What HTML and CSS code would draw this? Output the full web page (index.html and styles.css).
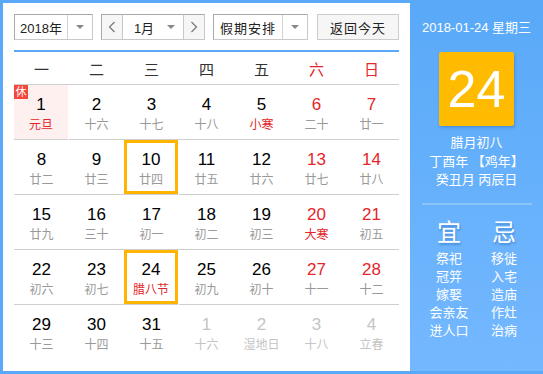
FILE: index.html
```html
<!DOCTYPE html>
<html lang="zh-CN">
<head>
  <meta charset="UTF-8">
  <title>万年历</title>
  <link rel="stylesheet" href="styles.css">
</head>
<body>
<div class="calendar">
  <div class="cal-main">
    <div class="toolbar">
      <div class="select select-year">
        <span class="select-text">2018年</span>
        <span class="select-arrow"></span>
      </div>
      <div class="month-group">
        <button class="nav-btn">
          <svg width="8" height="12" viewBox="0 0 8 12"><path d="M6.5 1 L1.5 6 L6.5 11" fill="none" stroke="#777" stroke-width="1.2"/></svg>
        </button>
        <div class="select select-month">
          <span class="select-text">1月</span>
          <span class="select-arrow no-line"></span>
        </div>
        <button class="nav-btn">
          <svg width="8" height="12" viewBox="0 0 8 12"><path d="M1.5 1 L6.5 6 L1.5 11" fill="none" stroke="#777" stroke-width="1.2"/></svg>
        </button>
      </div>
      <div class="select select-holiday">
        <span class="select-text">假期安排</span>
        <span class="select-arrow"></span>
      </div>
      <button class="today-btn">返回今天</button>
    </div>

    <div class="week-head">
      <span>一</span><span>二</span><span>三</span><span>四</span><span>五</span>
      <span class="red">六</span><span class="red">日</span>
    </div>

    <div class="days">
      <div class="day holiday"><span class="badge">休</span><b>1</b><i class="red">元旦</i></div>
      <div class="day"><b>2</b><i>十六</i></div>
      <div class="day"><b>3</b><i>十七</i></div>
      <div class="day"><b>4</b><i>十八</i></div>
      <div class="day"><b>5</b><i class="red">小寒</i></div>
      <div class="day weekend"><b>6</b><i>二十</i></div>
      <div class="day weekend"><b>7</b><i>廿一</i></div>

      <div class="day"><b>8</b><i>廿二</i></div>
      <div class="day"><b>9</b><i>廿三</i></div>
      <div class="day marked"><b>10</b><i>廿四</i></div>
      <div class="day"><b>11</b><i>廿五</i></div>
      <div class="day"><b>12</b><i>廿六</i></div>
      <div class="day weekend"><b>13</b><i>廿七</i></div>
      <div class="day weekend"><b>14</b><i>廿八</i></div>

      <div class="day"><b>15</b><i>廿九</i></div>
      <div class="day"><b>16</b><i>三十</i></div>
      <div class="day"><b>17</b><i>初一</i></div>
      <div class="day"><b>18</b><i>初二</i></div>
      <div class="day"><b>19</b><i>初三</i></div>
      <div class="day weekend"><b>20</b><i class="red">大寒</i></div>
      <div class="day weekend"><b>21</b><i>初五</i></div>

      <div class="day"><b>22</b><i>初六</i></div>
      <div class="day"><b>23</b><i>初七</i></div>
      <div class="day marked"><b>24</b><i class="red">腊八节</i></div>
      <div class="day"><b>25</b><i>初九</i></div>
      <div class="day"><b>26</b><i>初十</i></div>
      <div class="day weekend"><b>27</b><i>十一</i></div>
      <div class="day weekend"><b>28</b><i>十二</i></div>

      <div class="day last"><b>29</b><i>十三</i></div>
      <div class="day last"><b>30</b><i>十四</i></div>
      <div class="day last"><b>31</b><i>十五</i></div>
      <div class="day last other"><b>1</b><i>十六</i></div>
      <div class="day last other"><b>2</b><i>湿地日</i></div>
      <div class="day last other"><b>3</b><i>十八</i></div>
      <div class="day last other"><b>4</b><i>立春</i></div>
    </div>
  </div>

  <div class="cal-side">
    <div class="side-date">2018-01-24 星期三</div>
    <div class="side-day">24</div>
    <div class="side-lunar">
      <div>腊月初八</div>
      <div>丁酉年 【鸡年】</div>
      <div>癸丑月 丙辰日</div>
    </div>
    <div class="side-line"></div>
    <div class="yiji">
      <div class="yiji-col">
        <div class="yiji-title">宜</div>
        <div>祭祀</div>
        <div>冠笄</div>
        <div>嫁娶</div>
        <div>会亲友</div>
        <div>进人口</div>
      </div>
      <div class="yiji-col">
        <div class="yiji-title">忌</div>
        <div>移徙</div>
        <div>入宅</div>
        <div>造庙</div>
        <div>作灶</div>
        <div>治病</div>
      </div>
    </div>
  </div>
</div>
</body>
</html>
```

FILE: styles.css
```css
:root {
  --blue: #59a9f8;
  --blue-light: #74b8ff;
  --red: #e4262a;
  --text: #222;
  --soft: #999;
  --line: #cfcfcf;
  --orange: #ffb400;
}
html, body {
  margin: 0;
  padding: 0;
  background: #fff;
}
body {
  font-family: 'Liberation Sans', 'Noto Sans CJK SC', sans-serif;
  color: var(--text);
}
.calendar {
  width: 543px;
  height: 374px;
  box-sizing: border-box;
  border: 3px solid var(--blue);
  border-right: 0;
  display: flex;
}
.cal-main {
  width: 407px;
  box-sizing: border-box;
  padding: 11px 11px 0 11px;
  background: #fff;
}
.toolbar {
  display: flex;
  height: 26px;
  gap: 8px;
  padding-bottom: 10px;
  border-bottom: 2px solid var(--blue);
}
.select {
  display: flex;
  box-sizing: border-box;
  height: 26px;
  border: 1px solid #c8c8c8;
  border-top-color: #a9a9a9;
  border-left-color: #a9a9a9;
  background: #fff;
  font-size: 13px;
}
.select-text {
  flex: 1;
  display: flex;
  align-items: center;
  justify-content: center;
}
.select-arrow {
  width: 24px;
  border-left: 1px solid #d4d4d4;
  position: relative;
}
.select-arrow.no-line {
  border-left: 0;
}
.select-arrow:after {
  content: "";
  position: absolute;
  left: 8px;
  top: 10px;
  border-left: 4px solid transparent;
  border-right: 4px solid transparent;
  border-top: 4px solid #888;
}
.select-year { width: 79px; }
.month-group {
  display: flex;
  width: 104px;
}
.nav-btn {
  width: 22px;
  height: 26px;
  padding: 0;
  border: 1px solid #c8c8c8;
  border-top-color: #a9a9a9;
  background: #f6f6f6;
  display: flex;
  align-items: center;
  justify-content: center;
}
.nav-btn:first-child { border-left-color: #a9a9a9; }
.select-month {
  width: 60px;
  border-left: 0;
  border-right: 0;
}
.select-month .select-text { padding-left: 6px; }
.select-holiday {
  width: 95px;
}
.select-holiday .select-text { letter-spacing: 1px; }
.today-btn {
  margin-left: 1px;
  width: 82px;
  height: 26px;
  border: 1px solid #cbcbcb;
  background: #f6f6f6;
  font-family: inherit;
  font-size: 13px;
  color: #222;
  letter-spacing: 1px;
  padding: 0;
}
.week-head {
  display: grid;
  grid-template-columns: repeat(7, 55px);
  height: 32px;
  align-items: center;
  border-bottom: 1px solid var(--line);
  font-size: 15px;
  color: #333;
  text-align: center;
}
.red { color: var(--red); }
.days {
  display: grid;
  grid-template-columns: repeat(7, 55px);
}
.day {
  border-bottom: 1px solid var(--line);
  display: flex;
  flex-direction: column;
  align-items: center;
  padding-top: 10px;
  height: 44px;
  position: relative;
}
.day.last { border-bottom: 0; }
.day b {
  font-weight: normal;
  font-size: 17px;
  line-height: 20px;
  color: #000;
}
.day i {
  font-style: normal;
  font-size: 12px;
  line-height: 16px;
  margin-top: 2px;
  color: var(--soft);
}
.day i.red { color: var(--red); }
.day.weekend b { color: var(--red); }
.day.other b, .day.other i { color: #c4c4c4; }
.day.holiday {
  background: #fff0f0;
  margin-right: 1px;
}
.badge {
  position: absolute;
  left: 0;
  top: 0;
  width: 14px;
  height: 14px;
  background: #f5463c;
  color: #fff;
  font-size: 11px;
  line-height: 14px;
  text-align: center;
}
.day.marked {
  box-shadow: inset 0 0 0 3px var(--orange);
  margin-right: 1px;
}
.cal-side {
  width: 133px;
  background: linear-gradient(180deg, var(--blue) 0%, var(--blue-light) 100%);
  color: #fff;
  display: flex;
  flex-direction: column;
  align-items: center;
  padding-top: 17px;
}
.side-date {
  font-size: 13px;
  line-height: 16px;
}
.side-day {
  margin-top: 16px;
  width: 75px;
  height: 74px;
  background: #ffbb00;
  border-radius: 2px;
  box-shadow: 1px 2px 3px rgba(0, 60, 140, 0.25);
  font-size: 52px;
  line-height: 74px;
  text-align: center;
}
.side-lunar {
  margin-top: 8px;
  font-size: 13px;
  line-height: 18.5px;
  text-align: center;
}
.side-line {
  margin-top: 13px;
  width: 110px;
  height: 2px;
  background: #8dc4fb;
}
.yiji {
  display: grid;
  grid-template-columns: 55px 55px;
  margin-top: 14px;
  font-size: 13px;
  line-height: 18px;
  text-align: center;
}
.yiji-title {
  font-size: 24px;
  line-height: 28px;
  margin-bottom: 3px;
  text-shadow: 1px 2px 2px rgba(0, 60, 140, 0.3);
}
```
